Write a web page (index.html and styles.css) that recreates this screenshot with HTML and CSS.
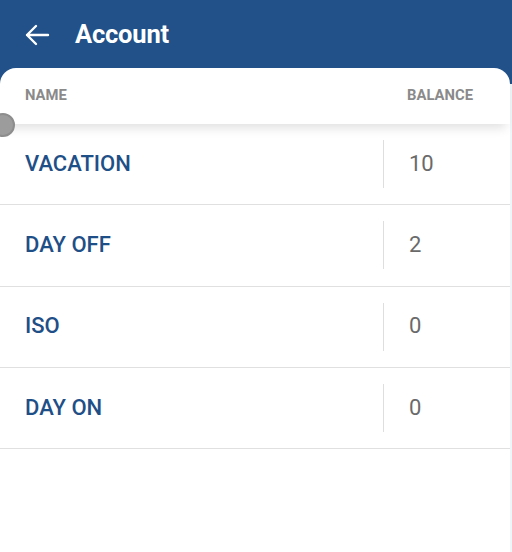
FILE: index.html
```html
<!DOCTYPE html>
<html>
<head>
<meta charset="utf-8">
<link rel="stylesheet" href="styles.css">
</head>
<body>
<div class="page">
  <header class="appbar">
    <svg class="back" width="26" height="22" viewBox="0 0 26 22"><path d="M24 11H3M12 2L3 11l9 9" fill="none" stroke="#fff" stroke-width="2.4" stroke-linecap="round" stroke-linejoin="round"/></svg>
    <h1 class="title">Account</h1>
  </header>
  <main class="card">
    <div class="thead">
      <span class="th-name">NAME</span>
      <span class="th-bal">BALANCE</span>
    </div>
    <span class="dot"></span>
    <div class="row"><span class="name">VACATION</span><span class="sep"></span><span class="val">10</span></div>
    <div class="row"><span class="name">DAY OFF</span><span class="sep"></span><span class="val">2</span></div>
    <div class="row"><span class="name">ISO</span><span class="sep"></span><span class="val">0</span></div>
    <div class="row"><span class="name">DAY ON</span><span class="sep"></span><span class="val">0</span></div>
  </main>
</div>
</body>
</html>
```
FILE: styles.css
```css
* { box-sizing: border-box; }
html, body { margin: 0; padding: 0; }
body {
  font-family: Roboto, "Liberation Sans", sans-serif;
  background: #eef6f8;
  width: 512px;
  height: 552px;
  overflow: hidden;
}
.page { position: relative; height: 552px; }
.appbar {
  background: #215188;
  height: 84px;
  display: flex;
  align-items: flex-start;
  padding: 23px 0 0 24px;
}
.back { margin-top: 1px; }
.title {
  margin: 0 0 0 25px;
  color: #fff;
  font-size: 25.5px;
  font-weight: 700;
  line-height: 22px;
  letter-spacing: -0.2px;
}
.card {
  position: relative;
  margin-top: -16px;
  width: 510px;
  height: 484px;
  background: #fff;
  border-radius: 16px 16px 0 0;
}
.thead {
  height: 56px;
  display: flex;
  align-items: center;
  justify-content: space-between;
  padding: 0 37px 0 25px;
  font-size: 14.8px;
  font-weight: 700;
  color: #8a8a8a;
  box-shadow: 0 8px 10px -4px rgba(0,0,0,0.12);
  position: relative;
  z-index: 1;
}
.thead span { padding-bottom: 2px; }
.dot {
  position: absolute;
  left: -9px;
  top: 45px;
  width: 24px;
  height: 24px;
  border-radius: 50%;
  background: #9c9c9c;
  border: 2px solid #8d8d8d;
  z-index: 2;
}
.row {
  height: 81.33px;
  display: flex;
  align-items: center;
  border-bottom: 1px solid #e0e0e0;
}
.name {
  flex: 1;
  padding-left: 25px;
  padding-bottom: 2px;
  color: #1f4f87;
  font-size: 22px;
  font-weight: 500;
}
.sep {
  width: 1px;
  height: 48px;
  background: #dedede;
}
.val {
  width: 126px;
  padding-left: 25px;
  padding-bottom: 2px;
  color: #6a6a6a;
  font-size: 22px;
  font-weight: 400;
}
```
